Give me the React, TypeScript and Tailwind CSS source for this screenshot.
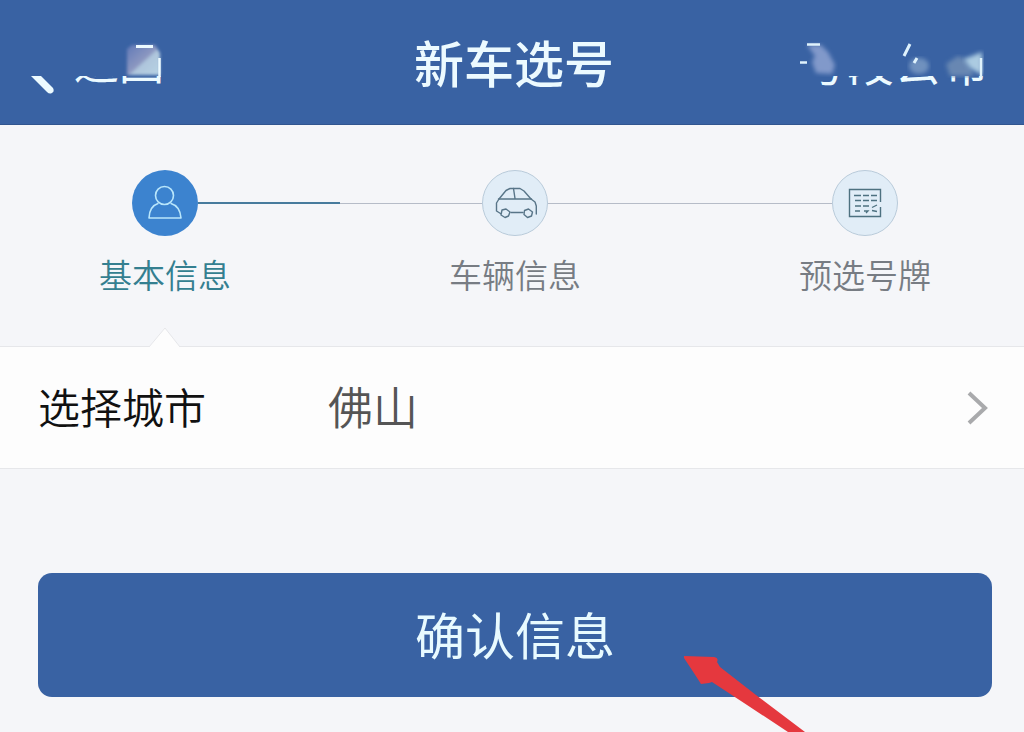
import React from "react";
import clsx from "clsx";

// ------------------------------------
// ICONS
// ------------------------------------
function PersonIcon() {
  return (
    <svg viewBox="0 0 36 36" className="h-9 w-9" fill="none" stroke="#b9e6fb" strokeWidth="1.6" strokeLinejoin="round">
      <circle cx="17.5" cy="10.5" r="9" />
      <path d="M11.5 18.2C6 20 2.200 25.500 2 33H34C33.500 25.500 29.500 20 23.500 18.200" />
    </svg>
  );
}

function CarIcon() {
  return (
    <svg viewBox="0 0 44 36" className="h-9 w-11" fill="none" stroke="#587588" strokeWidth="1.4" strokeLinecap="round" strokeLinejoin="round">
      <path d="M7.500 28.500L3.500 26V18L6 14L13 5.500L17 3.500H27L31 6L38 14L42 17L43.300 21V29" />
      <path d="M5.500 14H38.500M20.500 3.500L22 13.500" />
      <path d="M18 27.500H30" />
      <path d="M9 25L13 24L17 27L15.500 31L12 32.500L8 30Z" />
      <path d="M31.500 25.500L35.500 24L39.500 27L38.500 31L34.500 32.500L31 29.500Z" />
    </svg>
  );
}

function PlateIcon() {
  return (
    <svg viewBox="0 0 36 32" className="h-8 w-9" fill="none" stroke="#4d7180" strokeWidth="1.4">
      <path d="M33.500 20V29.500H2.500V2.500H33.500V15" />
      <path
        d="M7 8.500H14M16 8.500H22M24 8.500H30M8 13.500H14M16 13.500H22M24 13.500H30M8 19H14M16 19H22M25 20.500L30 18M8 24H13M17 24H21L19 26M25 23.500L30 24.500"
        strokeWidth="1.3"
      />
    </svg>
  );
}

// ------------------------------------
// HEADER LINKS
// ------------------------------------
function BackLink() {
  return (
    <a href="#back" className="relative pl-[34px] text-[45px] leading-[66px] text-[#ecfaff]">
      返回
      <svg className="pointer-events-none absolute top-0 -left-5" width="160" height="66" viewBox="20 28 160 66">
        <defs>
          <filter id="soft-a"><feGaussianBlur stdDeviation="1.5" /></filter>
          <linearGradient id="fade-a" x1="0" y1="0" x2="1" y2="1">
            <stop offset="0" stopColor="#6079b7" />
            <stop offset="0.5" stopColor="#8d98c1" />
            <stop offset="0.56" stopColor="#aec5dc" />
            <stop offset="1" stopColor="#b7d3e4" />
          </linearGradient>
        </defs>
        <rect x="20" y="28" width="160" height="48" fill="#3962a3" />
        <path d="M127 49L132 45H155L160 53V75H127Z" fill="url(#fade-a)" filter="url(#soft-a)" />
        <path d="M136 46.500H153" stroke="#ecfaff" strokeWidth="3" />
        <path d="M159.500 58V77" stroke="#ecfaff" strokeWidth="2.500" />
        <path d="M31 76H41L53 88Q55 92 51 93.500Q49 94 47 92Z" fill="#ecfaff" />
      </svg>
    </a>
  );
}

function NoticeLink() {
  return (
    <a href="#notice" className="relative text-[47px] leading-[66px] text-[#ecfaff]">
      号段公布
      <svg className="pointer-events-none absolute top-0 right-0" width="192" height="66" viewBox="796 28 192 66">
        <defs>
          <filter id="soft-b"><feGaussianBlur stdDeviation="2" /></filter>
        </defs>
        <rect x="796" y="28" width="192" height="48" fill="#3962a3" />
        <path d="M807 45H821L828 52L835 65L832 74L816 73L812 62L815 56Z" fill="#8199ca" filter="url(#soft-b)" />
        <ellipse cx="919" cy="66" rx="10" ry="8" fill="#6f91be" filter="url(#soft-b)" />
        <path d="M946 64L958 56L968 60L974 76H950Z" fill="#6787b2" filter="url(#soft-b)" />
        <path d="M964 59L982 52V75L970 68Z" fill="#abcbe1" filter="url(#soft-b)" />
        <path d="M807 44.500H820M800 62.500H807" stroke="#dff2fc" strokeWidth="2.500" />
        <path d="M904 56L910 44M914 63L917 58" stroke="#dff2fc" strokeWidth="3" />
        <path d="M981 58V77" stroke="#dff2fc" strokeWidth="2.500" />
      </svg>
    </a>
  );
}

// ------------------------------------
// STEPS
// ------------------------------------
const steps = [
  { label: "基本信息", icon: <PersonIcon />, active: true },
  { label: "车辆信息", icon: <CarIcon />, active: false },
  { label: "预选号牌", icon: <PlateIcon />, active: false },
];

function Connector({ half }: { half: boolean }) {
  return (
    <li aria-hidden="true" className="-mx-[33px] mt-8 flex h-[2px] flex-1 items-center">
      <div className={clsx("w-1/2", half ? "h-[2px] bg-[#477b9d]" : "h-px bg-[#b6bcc8]")} />
      <div className="h-px w-1/2 bg-[#b6bcc8]" />
    </li>
  );
}

function Steps() {
  return (
    <ol className="flex items-start pt-[45px] pr-[93px] pl-[99px]">
      {steps.map((step, i) => (
        <React.Fragment key={step.label}>
          {i > 0 && <Connector half={i === 1} />}
          <li className="flex w-[132px] flex-col items-center">
            <div
              className={clsx(
                "flex h-[66px] w-[66px] items-center justify-center rounded-full",
                step.active ? "bg-[#3c83cf]" : "border border-[#b9cbda] bg-[#e1edf7]"
              )}
            >
              {step.icon}
            </div>
            <span
              className={clsx(
                "mt-[14px] text-[33px] leading-[48px] font-[350] whitespace-nowrap",
                step.active ? "text-[#347f90]" : "text-[#777c83]"
              )}
            >
              {step.label}
            </span>
          </li>
        </React.Fragment>
      ))}
    </ol>
  );
}

export default function App() {
  return (
    <div className="relative min-h-screen overflow-hidden bg-[#f5f6f9] font-['Noto_Sans_CJK_SC',sans-serif]">
      <header className="grid h-[125px] grid-cols-[1fr_auto_1fr] items-center border-b border-[#31558f] bg-[#3962a3] pr-9 pb-[2px] pl-10">
        <div className="flex"><BackLink /></div>
        <h1 className="text-[50px] leading-[66px] font-medium text-[#ecfaff]">新车选号</h1>
        <div className="flex justify-end"><NoticeLink /></div>
      </header>

      <main>
        <section className="h-[221px]">
          <Steps />
        </section>

        {/* City picker, with the notch pointing at the current step */}
        <div className="relative flex h-[123px] items-center border-y border-[#e6e7ea] bg-[#fdfdfd] pr-8 pb-1 pl-[38px]">
          <svg className="absolute -top-5 left-[149px]" width="32" height="21" viewBox="0 0 32 21">
            <path d="M0 20L16 1L31 20V21H0Z" fill="#fdfdfd" />
            <path d="M0 20L16 1L31 20" fill="none" stroke="#e6e7ea" />
          </svg>
          <label htmlFor="city" className="w-[290px] text-[42px] leading-[60px] font-[350] text-[#111111]">
            选择城市
          </label>
          <select
            id="city"
            defaultValue="佛山"
            className="h-full min-w-0 flex-1 appearance-none bg-transparent text-[45px] font-[350] text-[#555555] outline-none"
          >
            <option>佛山</option>
          </select>
          <svg className="pointer-events-none absolute top-11 right-9" width="22" height="34" viewBox="0 0 22 34" fill="none" stroke="#a9aaac" strokeWidth="4">
            <path d="M3 2L19 17L3 32" />
          </svg>
        </div>

        <div className="relative mt-[104px] mr-8 ml-[38px]">
          <button type="button" className="h-[124px] w-full rounded-[14px] bg-[#3962a3] pb-1 text-[50px] text-[#e8faff]">
            确认信息
          </button>
          <svg className="pointer-events-none absolute top-[82px] left-1/2 ml-[168px]" width="124" height="77" viewBox="683 655 124 77">
            <path d="M684 656L714 657Q719 658 717 662L720 667L756 695L805 732H788L744 703L712 682L709 683L701 684Q696 676 684 658Z" fill="#e5383e" />
          </svg>
        </div>
      </main>
    </div>
  );
}
